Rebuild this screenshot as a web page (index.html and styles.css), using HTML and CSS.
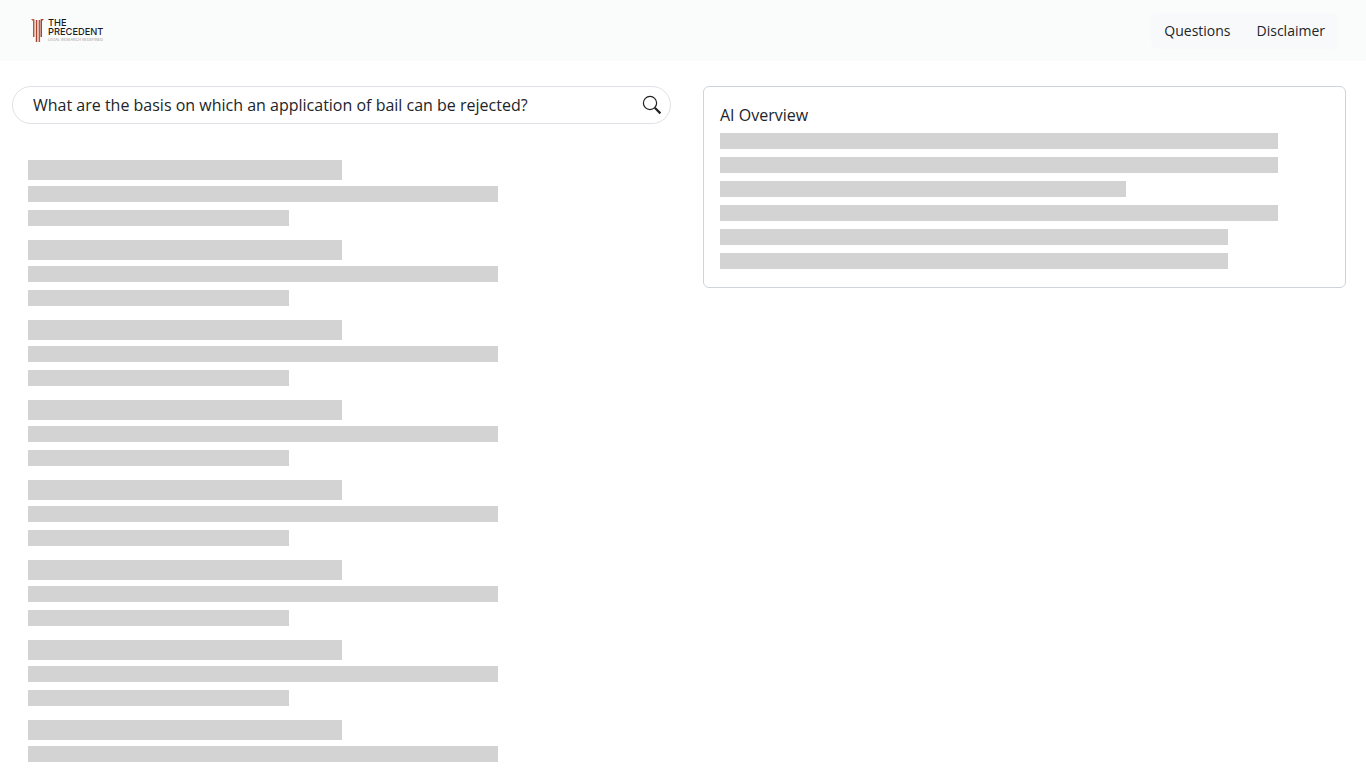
FILE: index.html
```html
<!DOCTYPE html>
<html lang="en">
<head>
<meta charset="utf-8">
<title>The Precedent</title>
<link rel="stylesheet" href="styles.css">
</head>
<body>
<header class="topbar">
  <a class="brand" href="#">
    <svg class="brand-mark" width="13" height="26" viewBox="0 0 13 26" aria-hidden="true">
      <path d="M0 1h3.200l.3 2v16h-1.500v-16z" fill="#b8583e"/>
      <path d="M4.800 2h1.500v22h-1.500z" fill="#a8452e"/>
      <path d="M7.600 2h1.500v22h-1.500z" fill="#b8583e"/>
      <path d="M13 1h-3.200l-.3 2v16h1.500v-16z" fill="#a8452e"/>
    </svg>
    <span class="brand-text">
      <span class="brand-name">THE<br>PRECEDENT</span>
      <span class="brand-tag">LEGAL RESEARCH REDEFINED</span>
    </span>
  </a>
  <nav class="nav">
    <a class="nav-link" href="#">Questions</a>
    <a class="nav-link" href="#">Disclaimer</a>
  </nav>
</header>
<main class="layout">
  <section class="results">
    <div class="search">
      <span class="search-text">What are the basis on which an application of bail can be rejected?</span>
      <svg class="search-icon" width="20" height="20" viewBox="0 0 20 20" aria-hidden="true">
        <circle cx="8" cy="8" r="6.600" fill="none" stroke="#222" stroke-width="1.200"/>
        <path d="M12.800 12.800l5.600 5.600" stroke="#222" stroke-width="2.200" fill="none"/>
      </svg>
    </div>
    <div class="skeleton-list">
      <div class="skeleton-item"><div class="bar bar-title"></div><div class="bar bar-long"></div><div class="bar bar-short"></div></div>
      <div class="skeleton-item"><div class="bar bar-title"></div><div class="bar bar-long"></div><div class="bar bar-short"></div></div>
      <div class="skeleton-item"><div class="bar bar-title"></div><div class="bar bar-long"></div><div class="bar bar-short"></div></div>
      <div class="skeleton-item"><div class="bar bar-title"></div><div class="bar bar-long"></div><div class="bar bar-short"></div></div>
      <div class="skeleton-item"><div class="bar bar-title"></div><div class="bar bar-long"></div><div class="bar bar-short"></div></div>
      <div class="skeleton-item"><div class="bar bar-title"></div><div class="bar bar-long"></div><div class="bar bar-short"></div></div>
      <div class="skeleton-item"><div class="bar bar-title"></div><div class="bar bar-long"></div><div class="bar bar-short"></div></div>
      <div class="skeleton-item"><div class="bar bar-title"></div><div class="bar bar-long"></div><div class="bar bar-short"></div></div>
    </div>
  </section>
  <aside class="overview">
    <h2 class="overview-title">AI Overview</h2>
    <div class="overview-bars">
      <div class="bar line-a"></div>
      <div class="bar line-a"></div>
      <div class="bar line-b"></div>
      <div class="bar line-a"></div>
      <div class="bar line-c"></div>
      <div class="bar line-c"></div>
    </div>
  </aside>
</main>
</body>
</html>
```
FILE: styles.css
```css
* { box-sizing: border-box; }
html, body { height: 768px; overflow: hidden; }
body {
  margin: 0;
  background: #fff;
  color: #212529;
  font-family: "Open Sans", sans-serif;
  font-size: 16px;
}
.topbar {
  height: 61px;
  background: #fafbfb;
  display: flex;
  align-items: center;
  justify-content: space-between;
  padding: 0 28px 0 31px;
}
.brand {
  display: flex;
  align-items: center;
  gap: 4px;
  color: #222;
  text-decoration: none;
}
.brand-mark { display: block; }
.brand-text { display: flex; flex-direction: column; }
.brand-name {
  font-family: Inter, sans-serif;
  font-size: 9.300px;
  line-height: 9px;
  font-weight: 500;
  color: #1d1d1d;
}
.brand-tag {
  font-family: Inter, sans-serif;
  font-size: 3.800px;
  line-height: 8px;
  color: #a0a0a0;
  white-space: nowrap;
}
.nav {
  display: flex;
  background: #f8f9fa;
  border-radius: 6px;
  height: 36px;
}
.nav-link {
  padding: 0 13px;
  line-height: 36px;
  font-size: 14px;
  color: #212529;
  text-decoration: none;
}
.layout {
  display: flex;
  gap: 32px;
  padding: 25px 20px 0 12px;
  align-items: flex-start;
}
.results { width: 659px; flex: none; }
.search {
  height: 38px;
  border: 1px solid #dee2e6;
  border-radius: 19px;
  display: flex;
  align-items: center;
  justify-content: space-between;
  padding: 0 8px 0 20px;
}
.search-text { font-size: 16px; color: #212529; }
.search-icon { display: block; }
.skeleton-list {
  padding: 36px 16px 0;
  display: flex;
  flex-direction: column;
  gap: 14px;
}
.skeleton-item { display: flex; flex-direction: column; }
.bar { background: #d3d3d3; height: 16px; }
.bar-title { width: 314px; height: 20px; margin-bottom: 6px; }
.bar-long { width: 470px; margin-bottom: 8px; }
.bar-short { width: 261px; }
.overview {
  flex: 1;
  height: 202px;
  border: 1px solid #ced4da;
  border-radius: 6px;
  padding: 16px;
}
.overview-title {
  margin: 0;
  font-size: 16px;
  font-weight: 400;
  line-height: 24px;
  color: #212529;
}
.overview-bars {
  margin-top: 6px;
  display: flex;
  flex-direction: column;
  gap: 8px;
}
.line-a { width: 558px; }
.line-b { width: 406px; }
.line-c { width: 508px; }
```
